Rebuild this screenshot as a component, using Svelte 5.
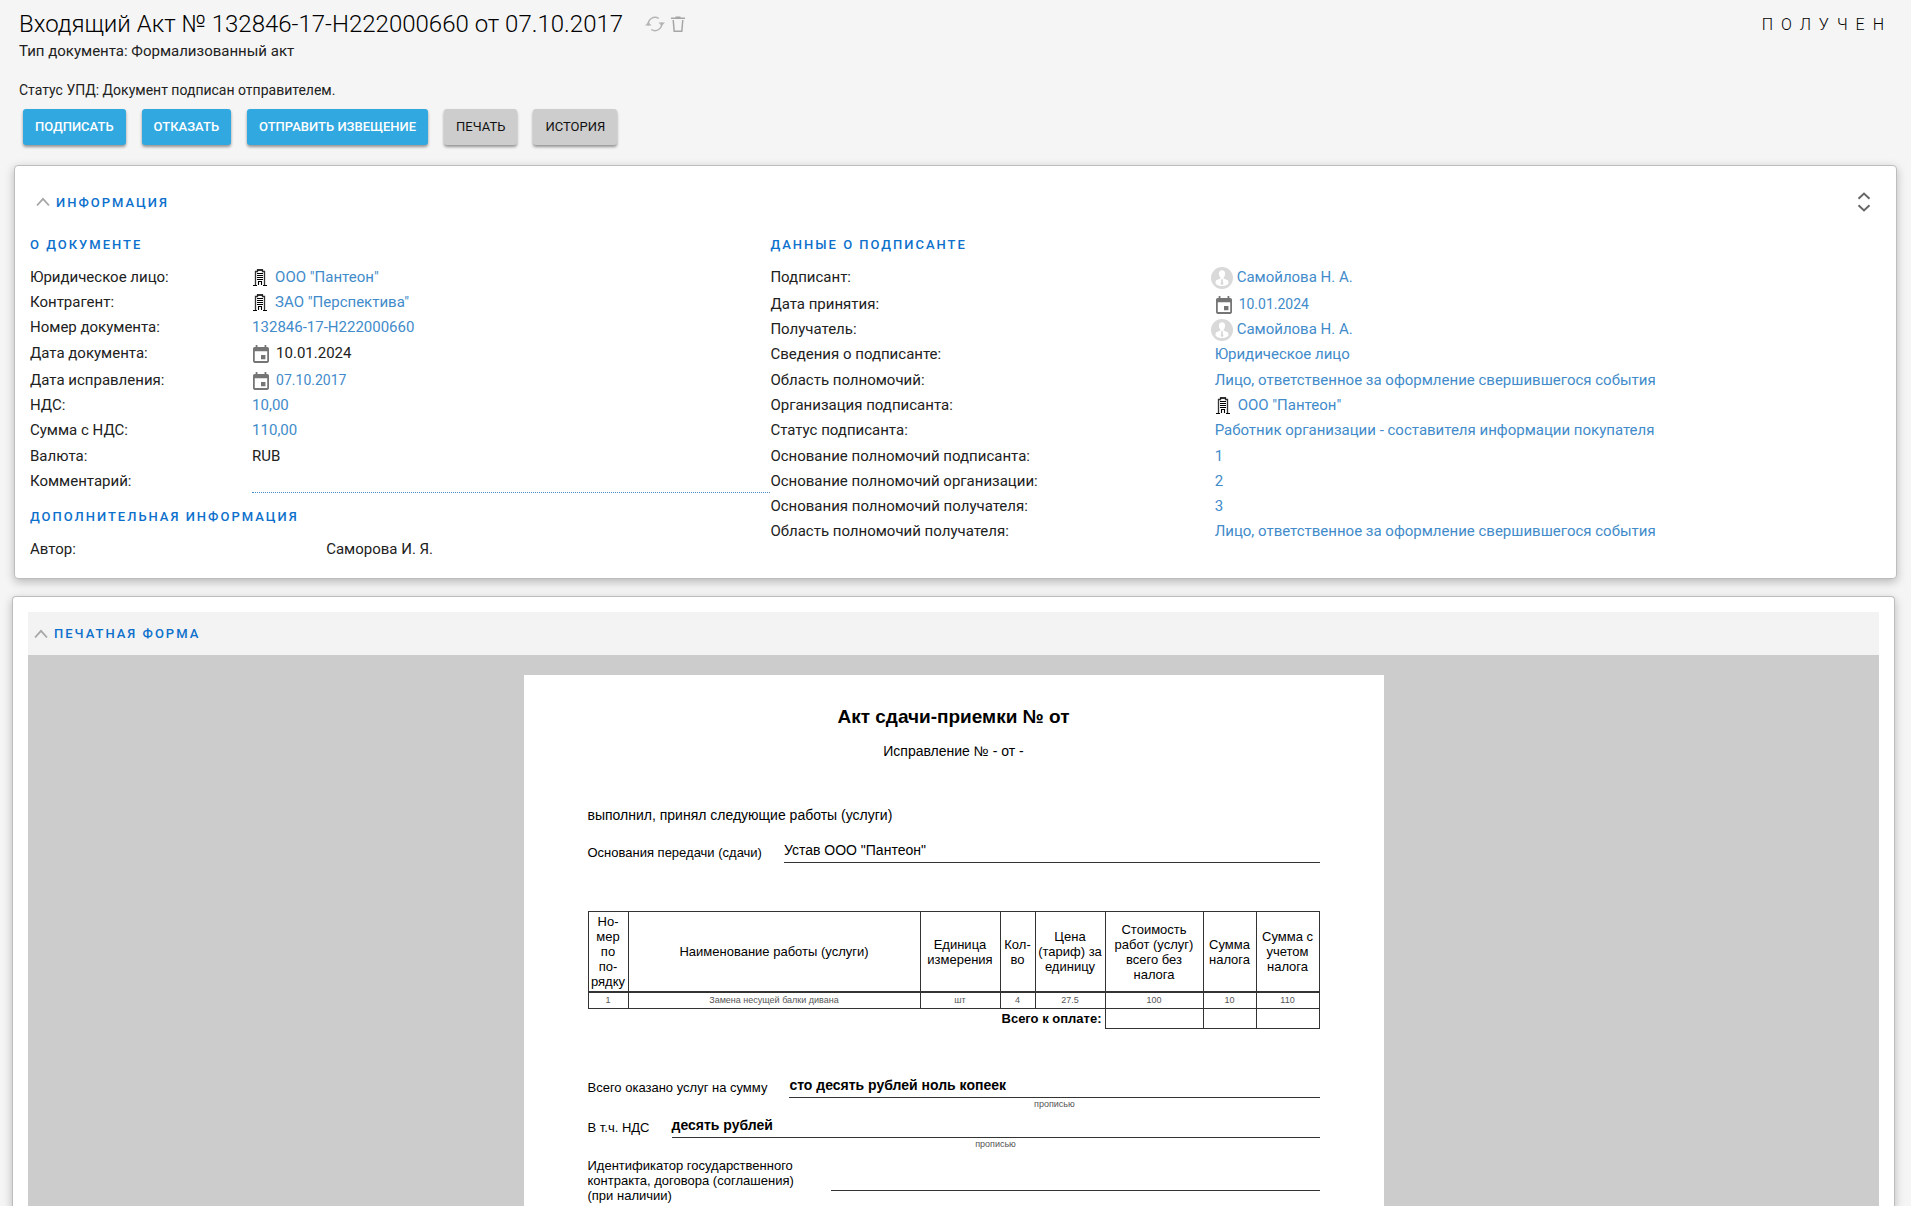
<script>
  const actions = [
    { label: 'ПОДПИСАТЬ', primary: true },
    { label: 'ОТКАЗАТЬ', primary: true },
    { label: 'ОТПРАВИТЬ ИЗВЕЩЕНИЕ', primary: true },
    { label: 'ПЕЧАТЬ', primary: false },
    { label: 'ИСТОРИЯ', primary: false }
  ];

  const about = [
    { label: 'Юридическое лицо:', value: 'ООО "Пантеон"', icon: 'org', link: true },
    { label: 'Контрагент:', value: 'ЗАО "Перспектива"', icon: 'org', link: true },
    { label: 'Номер документа:', value: '132846-17-Н222000660', link: true, size: 'mid' },
    { label: 'Дата документа:', value: '10.01.2024', icon: 'date', size: 'tall' },
    { label: 'Дата исправления:', value: '07.10.2017', icon: 'date', link: true },
    { label: 'НДС:', value: '10,00', link: true },
    { label: 'Сумма с НДС:', value: '110,00', link: true, size: 'mid' },
    { label: 'Валюта:', value: 'RUB' }
  ];

  const scope = 'Лицо, ответственное за оформление свершившегося события';
  const signer = [
    { label: 'Подписант:', value: 'Самойлова Н. А.', icon: 'person', link: true, size: 'tall' },
    { label: 'Дата принятия:', value: '10.01.2024', icon: 'date', link: true },
    { label: 'Получатель:', value: 'Самойлова Н. А.', icon: 'person', link: true },
    { label: 'Сведения о подписанте:', value: 'Юридическое лицо', link: true, size: 'mid' },
    { label: 'Область полномочий:', value: scope, link: true },
    { label: 'Организация подписанта:', value: 'ООО "Пантеон"', icon: 'org', link: true },
    { label: 'Статус подписанта:', value: 'Работник организации - составителя информации покупателя', link: true, size: 'mid' },
    { label: 'Основание полномочий подписанта:', value: '1', link: true },
    { label: 'Основание полномочий организации:', value: '2', link: true },
    { label: 'Основания полномочий получателя:', value: '3', link: true },
    { label: 'Область полномочий получателя:', value: scope, link: true }
  ];

  let infoOpen = $state(true);
  let formOpen = $state(true);
  let comment = $state('');
</script>

{#snippet fieldIcon(kind)}
  {#if kind === 'org'}
    <svg class="ico org" viewBox="0 0 14 17" aria-hidden="true">
      <path d="M2.500 16V2.500h2v-1.500h5v1.500h2V16" fill="none" stroke="#333" stroke-width="1.300" />
      <path d="M4 1h6M4 4.500h6M4 6.500h6M4 8.500h6M4 10.500h6M0 16.500h4M10 16.500h4M5.500 16v-3.500h3V16" fill="none" stroke="#000" stroke-width="1.100" />
    </svg>
  {:else if kind === 'date'}
    <svg class="ico date" viewBox="3 1 18 20" aria-hidden="true">
      <path fill="#757575" d="M17 12h-5v5h5v-5zM16 1v2H8V1H6v2H5c-1.11 0-1.99.9-1.99 2L3 19c0 1.1.89 2 2 2h14c1.1 0 2-.9 2-2V5c0-1.1-.9-2-2-2h-1V1h-2zm3 18H5V8h14v11z" />
    </svg>
  {:else if kind === 'person'}
    <svg class="ico person" viewBox="0 0 22 22" aria-hidden="true">
      <circle cx="11" cy="11" r="11" fill="#d9d9d9" />
      <path fill="#fff" d="M11 3.2c2 0 3.1 1.4 3.1 3.4 0 1.700-.7 3.400-1.600 4.200v.8l3.700 1.400c.8.4 1.200 1.200 1.200 2.200v1.600c-1.600 1.500-3.900 2.300-6.400 2.300s-4.800-.8-6.400-2.300v-1.600c0-1 .4-1.800 1.200-2.200l3.700-1.400v-.8c-.9-.8-1.600-2.500-1.600-4.200 0-2 1.100-3.400 3.100-3.400z" />
      <path fill="#d9d9d9" d="M10.200 12.200h1.600l.3 1-.4.8.8 2.800-1.500 1.500-1.500-1.500.8-2.800-.4-.8z" />
    </svg>
  {/if}
{/snippet}

{#snippet chevron(open)}
  <svg class="chevron" class:closed={!open} viewBox="0 0 14 10" aria-hidden="true">
    <path d="M1 8.500 7 1.800l6 6.700" fill="none" stroke="#a6a6a6" stroke-width="1.800" />
  </svg>
{/snippet}

{#snippet field(row)}
  <div class="row {row.size ?? ''}">
    <dt>{row.label}</dt>
    <dd>
      {#if row.icon}{@render fieldIcon(row.icon)}{/if}
      {#if row.link}
        <a href="#field" class:small={row.icon === 'date'}>{row.value}</a>
      {:else}
        <span>{row.value}</span>
      {/if}
    </dd>
  </div>
{/snippet}

<div class="page">
  <header>
    <div class="titlebar">
      <h1>Входящий Акт № 132846-17-Н222000660 от 07.10.2017</h1>
      <button class="tool" aria-label="Обновить">
        <svg width="20" height="16" viewBox="0 0 20 16" aria-hidden="true">
          <path d="M3.500 9.500A6.700 6.700 0 0 1 13.800 2.500M16.500 6.500A6.700 6.700 0 0 1 6.200 13.500" fill="none" stroke="#b5b5b5" stroke-width="1.500" />
          <path d="M0 9.500h6.500L3.300 6zM13.500 6.500H20L16.700 10z" fill="#b5b5b5" />
        </svg>
      </button>
      <button class="tool" aria-label="Удалить">
        <svg width="14" height="16" viewBox="0 0 14 16" aria-hidden="true">
          <path d="M0 2.200h14M4.500 1.200h5M2.200 4l1 11.200h7.600l1-11.200" fill="none" stroke="#a6a6a6" stroke-width="1.500" />
        </svg>
      </button>
      <span class="state">ПОЛУЧЕН</span>
    </div>
    <p class="kind">Тип документа: Формализованный акт</p>
    <p class="status">Статус УПД: Документ подписан отправителем.</p>
    <div class="actions">
      {#each actions as a}
        <button class="btn" class:primary={a.primary}>{a.label}</button>
      {/each}
    </div>
  </header>

  <section class="card info">
    <div class="infohead">
      <button class="toggle" aria-expanded={infoOpen} onclick={() => (infoOpen = !infoOpen)}>
        {@render chevron(infoOpen)}ИНФОРМАЦИЯ
      </button>
      <button class="tool" aria-label="Развернуть все">
        <svg width="14" height="20" viewBox="0 0 14 20" aria-hidden="true">
          <path d="M1.500 6.700 7 1.600l5.500 5.100M1.500 13.300 7 18.400l5.500-5.100" fill="none" stroke="#666" stroke-width="2" />
        </svg>
      </button>
    </div>
    {#if infoOpen}
      <div class="columns">
        <div class="about">
          <h2>О ДОКУМЕНТЕ</h2>
          <dl>
            {#each about as row}{@render field(row)}{/each}
          </dl>
          <div class="row">
            <label for="comment">Комментарий:</label>
            <input id="comment" type="text" bind:value={comment} />
          </div>
          <h2 class="extra">ДОПОЛНИТЕЛЬНАЯ ИНФОРМАЦИЯ</h2>
          <dl class="wide">
            {@render field({ label: 'Автор:', value: 'Саморова И. Я.' })}
          </dl>
        </div>
        <div class="signer">
          <h2>ДАННЫЕ О ПОДПИСАНТЕ</h2>
          <dl class="wide">
            {#each signer as row}{@render field(row)}{/each}
          </dl>
        </div>
      </div>
    {/if}
  </section>

  <section class="card form">
    <div class="formhead">
      <button class="toggle" aria-expanded={formOpen} onclick={() => (formOpen = !formOpen)}>
        {@render chevron(formOpen)}ПЕЧАТНАЯ ФОРМА
      </button>
    </div>
    {#if formOpen}
      <div class="viewer">
        <article class="sheet">
          <h3>Акт сдачи-приемки № от</h3>
          <p class="fix">Исправление № - от -</p>
          <p class="done">выполнил, принял следующие работы (услуги)</p>
          <div class="line basis">
            <span>Основания передачи (сдачи)</span>
            <div class="fill">Устав ООО "Пантеон"</div>
          </div>

          <table>
            <colgroup>
              <col class="c1" /><col /><col class="c3" /><col class="c4" />
              <col class="c5" /><col class="c6" /><col class="c7" /><col class="c8" />
            </colgroup>
            <thead>
              <tr>
                <th>Но-<br />мер<br />по<br />по-<br />рядку</th>
                <th>Наименование работы (услуги)</th>
                <th>Единица измерения</th>
                <th>Кол-<br />во</th>
                <th>Цена<br />(тариф) за<br />единицу</th>
                <th>Стоимость<br />работ (услуг)<br />всего без<br />налога</th>
                <th>Сумма налога</th>
                <th>Сумма с<br />учетом<br />налога</th>
              </tr>
            </thead>
            <tbody>
              <tr>
                <td>1</td><td>Замена несущей балки дивана</td><td>шт</td><td>4</td>
                <td>27.5</td><td>100</td><td>10</td><td>110</td>
              </tr>
            </tbody>
            <tfoot>
              <tr>
                <th colspan="5">Всего к оплате:</th>
                <td></td><td></td><td></td>
              </tr>
            </tfoot>
          </table>

          <div class="line">
            <span>Всего оказано услуг на сумму</span>
            <div class="words">
              <div class="fill strong">сто десять рублей ноль копеек</div>
              <small>прописью</small>
            </div>
          </div>
          <div class="line">
            <span>В т.ч. НДС</span>
            <div class="words">
              <div class="fill strong">десять рублей</div>
              <small>прописью</small>
            </div>
          </div>
          <div class="contract">
            <span>Идентификатор государственного контракта, договора (соглашения) (при наличии)</span>
            <div class="fill"></div>
          </div>
        </article>
      </div>
    {/if}
  </section>
</div>

<style>
  :global(body) {
    margin: 0;
    background: #f5f5f5;
  }
  .page {
    box-sizing: border-box;
    min-height: 100vh;
    display: flex;
    flex-direction: column;
    font-family: Roboto, 'Liberation Sans', sans-serif;
    font-size: 15px;
    color: #212121;
  }
  button {
    font-family: inherit;
    cursor: pointer;
  }
  h1, h2, h3, p, dl, dd {
    margin: 0;
  }
  header {
    padding: 8px 19px 0;
  }
  .titlebar {
    display: flex;
    align-items: center;
    height: 32px;
  }
  h1 {
    font-size: 24px;
    font-weight: 300;
    color: #000;
    margin-right: 22px;
  }
  .tool {
    border: 0;
    background: none;
    padding: 0;
    margin-right: 6px;
    display: flex;
  }
  .state {
    margin-left: auto;
    font-size: 16px;
    font-weight: 300;
    letter-spacing: 8px;
    color: #000;
  }
  .kind {
    font-size: 15px;
    line-height: 22px;
  }
  .status {
    font-size: 14px;
    line-height: 22px;
    margin-top: 17px;
  }
  .actions {
    display: flex;
    gap: 16px;
    padding: 8px 4px 0;
  }
  .btn {
    height: 36px;
    padding: 0 12px 2px;
    border: 0;
    border-radius: 3px;
    background: #cdcdcd;
    color: #111;
    font-size: 13px;
    box-shadow: 0 2px 3px rgba(0, 0, 0, 0.4);
  }
  .btn.primary {
    background: #31a8e0;
    color: #fff;
    font-weight: 500;
  }
  .card {
    background: #fff;
    border: 1px solid #bdbdbd;
    border-radius: 4px;
    box-shadow: 0 3px 10px rgba(0, 0, 0, 0.25);
  }
  .info {
    margin: 20px 14px 0;
    padding: 20px 15px 16px;
  }
  .infohead {
    display: flex;
    justify-content: space-between;
    align-items: center;
    height: 32px;
    padding: 0 4px 0 6px;
  }
  .toggle {
    display: flex;
    align-items: center;
    gap: 6px;
    border: 0;
    padding: 0;
    background: none;
  }
  .toggle, h2 {
    font-size: 13px;
    font-weight: 500;
    letter-spacing: 2px;
    color: #0d70cc;
  }
  .chevron {
    width: 14px;
    height: 10px;
  }
  .chevron.closed {
    transform: rotate(180deg);
  }
  .columns {
    display: grid;
    grid-template-columns: 2fr 3fr;
    padding-top: 17px;
  }
  h2 {
    line-height: 20px;
    margin-bottom: 10px;
  }
  h2.extra {
    margin-top: 13px;
  }
  .row {
    display: grid;
    grid-template-columns: 30% 70%;
    line-height: 25px;
    height: 25px;
  }
  .wide .row {
    grid-template-columns: 40% 60%;
  }
  .row.mid {
    height: 26px;
  }
  .row.tall {
    height: 27px;
  }
  dd {
    display: flex;
    align-items: center;
    height: 25px;
  }
  a {
    color: #428bca;
    text-decoration: none;
  }
  a.small {
    font-size: 14px;
  }
  input {
    box-sizing: border-box;
    height: 24px;
    border: 0;
    border-bottom: 1px dotted #428bca;
    padding: 0;
    min-width: 0;
    background: none;
    font: inherit;
    outline: 0;
  }
  .ico {
    flex: none;
  }
  .org {
    width: 14px;
    height: 17px;
    margin: 0 8px 0 1px;
  }
  .date {
    width: 16px;
    height: 18px;
    margin: 0 7px 0 1px;
  }
  .person {
    width: 22px;
    height: 22px;
    margin: 0 4px 0 -4px;
  }
  .form {
    flex: 1;
    display: flex;
    flex-direction: column;
    margin: 17px 16px 0 12px;
    padding: 15px 15px 0;
    border-bottom: 0;
    border-radius: 4px 4px 0 0;
  }
  .formhead {
    display: flex;
    align-items: center;
    height: 43px;
    padding-left: 6px;
    background: #f3f3f3;
  }
  .viewer {
    flex: 1;
    display: flex;
    justify-content: center;
    padding-top: 20px;
    background: #ccc;
  }
  .sheet {
    box-sizing: border-box;
    width: 860px;
    padding: 30px 64px 0;
    background: #fff;
    color: #000;
    font-family: 'Liberation Sans', Arial, sans-serif;
    font-size: 13px;
    line-height: 15px;
  }
  h3 {
    font-size: 19px;
    line-height: 24px;
    text-align: center;
  }
  .fix, .done, .fill {
    font-size: 14px;
    line-height: 16px;
  }
  .fix {
    margin-top: 14px;
    text-align: center;
  }
  .done {
    margin-top: 48px;
  }
  .line {
    display: flex;
    gap: 22px;
  }
  .line > span {
    padding-top: 6px;
  }
  .fill {
    flex: 1;
    border-bottom: 1px solid #333;
  }
  .line .fill {
    padding: 3px 0 4px;
  }
  .basis {
    margin-top: 16px;
  }
  .strong {
    font-weight: 700;
  }
  .words {
    flex: 1;
    text-align: center;
  }
  .words .fill {
    text-align: left;
  }
  small {
    display: block;
    font-size: 9px;
    line-height: 12px;
    padding-bottom: 4px;
    color: #555;
  }
  .contract {
    display: flex;
    gap: 24px;
    padding-top: 4px;
  }
  .contract > span {
    width: 219px;
    padding-bottom: 4px;
  }
  .contract .fill {
    align-self: flex-start;
    height: 32px;
  }
  table {
    width: 100%;
    table-layout: fixed;
    border-collapse: collapse;
    margin: 48px 0 45px;
    text-align: center;
  }
  .c1 { width: 40px; }
  .c3 { width: 80px; }
  .c4 { width: 35px; }
  .c5 { width: 70px; }
  .c6 { width: 98px; }
  .c7 { width: 53px; }
  .c8 { width: 63px; }
  th, td {
    border: 1px solid #333;
    padding: 0;
  }
  th {
    font-weight: 400;
  }
  thead th {
    height: 79px;
    border-bottom-width: 2px;
  }
  tbody td {
    height: 15px;
    font-size: 9px;
    line-height: 11px;
    color: #555;
  }
  tfoot th {
    border: 0;
    padding-right: 3px;
    text-align: right;
    font-weight: 700;
  }
  tfoot td {
    height: 19px;
  }
</style>
